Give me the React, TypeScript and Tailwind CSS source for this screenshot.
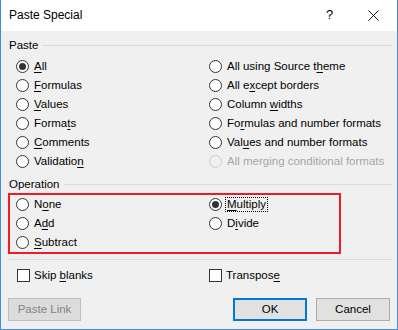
import React from 'react';

type Label = { pre?: string; k?: string; post?: string };

const Radio: React.FC<{ checked?: boolean; disabled?: boolean }> = ({ checked, disabled }) => (
  <span
    className={
      disabled
        ? 'w-[13px] h-[13px] rounded-full border border-[#cccccc] bg-[#f0f0f0] shrink-0'
        : 'w-[13px] h-[13px] rounded-full border border-[#333333] bg-white shrink-0 flex items-center justify-center'
    }
  >
    {checked && <span className="w-[7px] h-[7px] rounded-full bg-[#333333]" />}
  </span>
);

const Text: React.FC<{ label: Label }> = ({ label }) => (
  <>
    {label.pre}
    {label.k && <u className="underline-offset-[2px]">{label.k}</u>}
    {label.post}
  </>
);

const Option: React.FC<{ label: Label; checked?: boolean; disabled?: boolean; focus?: boolean }> = ({
  label,
  checked,
  disabled,
  focus,
}) => (
  <div className="h-[19px] flex items-center gap-[5px]">
    <Radio checked={checked} disabled={disabled} />
    <span
      className={
        focus
          ? 'outline outline-1 outline-dotted outline-black px-[1px] -ml-[1px] leading-[13px]'
          : disabled
            ? 'text-[#a6a6a6]'
            : ''
      }
    >
      <Text label={label} />
    </span>
  </div>
);

const Check: React.FC<{ label: Label }> = ({ label }) => (
  <div className="h-[19px] flex items-center gap-[4px]">
    <span className="w-[13px] h-[13px] border border-[#333333] bg-white shrink-0" />
    <span>
      <Text label={label} />
    </span>
  </div>
);

const GroupLabel: React.FC<{ title: string }> = ({ title }) => (
  <div className="h-[14px] flex items-center pl-[1px]">
    <span className="leading-[14px]">{title}</span>
    <div className="flex-1 h-px bg-[#dadada] ml-[4px]" />
  </div>
);

export default function App() {
  return (
    <div
      className="w-[398px] h-[330px] flex flex-col border-x border-b border-[#3b8ee3] text-[11.5px] text-black bg-[#f0f0f0]"
      style={{ fontFamily: '"Liberation Sans", Arial, sans-serif' }}
    >
      <div className="h-[31px] bg-white flex items-center pl-[8px] shrink-0 text-[12px]">
        <span className="flex-1 -mt-[1px]">Paste Special</span>
        <span className="w-[10px] text-[13px] mr-[32px] -mt-[1px]">?</span>
        <svg className="mr-[18px]" width="11" height="11" viewBox="0 0 11 11">
          <path d="M0.5 0.5L10.5 10.5M10.5 0.5L0.5 10.5" stroke="#111" strokeWidth="1" />
        </svg>
      </div>

      <div className="flex-1 flex flex-col pl-[7px] pr-[5px]">
        <div className="mt-[7px]">
          <GroupLabel title="Paste" />
        </div>
        <div className="mt-[5px] grid grid-cols-[193px_1fr] pl-[8px]">
          <Option label={{ k: 'A', post: 'll' }} checked />
          <Option label={{ pre: 'All using Source t', k: 'h', post: 'eme' }} />
          <Option label={{ k: 'F', post: 'ormulas' }} />
          <Option label={{ pre: 'All e', k: 'x', post: 'cept borders' }} />
          <Option label={{ k: 'V', post: 'alues' }} />
          <Option label={{ pre: 'Column ', k: 'w', post: 'idths' }} />
          <Option label={{ pre: 'Forma', k: 't', post: 's' }} />
          <Option label={{ pre: 'Fo', k: 'r', post: 'mulas and number formats' }} />
          <Option label={{ k: 'C', post: 'omments' }} />
          <Option label={{ pre: 'Val', k: 'u', post: 'es and number formats' }} />
          <Option label={{ pre: 'Validatio', k: 'n' }} />
          <Option label={{ pre: 'All merging conditional formats' }} disabled />
        </div>

        <div className="mt-[6px]">
          <GroupLabel title="Operation" />
        </div>
        <div className="mt-[2px] w-[333px] border-2 border-[#ee1c25] pl-[6px] grid grid-cols-[193px_1fr]">
          <Option label={{ pre: 'N', k: 'o', post: 'ne' }} />
          <Option label={{ k: 'M', post: 'ultiply' }} checked focus />
          <Option label={{ pre: 'A', k: 'd', post: 'd' }} />
          <Option label={{ pre: 'D', k: 'i', post: 'vide' }} />
          <Option label={{ k: 'S', post: 'ubtract' }} />
          <div />
        </div>

        <div className="mt-[5px] ml-[1px] h-px bg-[#dadada]" />

        <div className="mt-[6px] grid grid-cols-[192px_1fr] pl-[9px]">
          <Check label={{ pre: 'Skip ', k: 'b', post: 'lanks' }} />
          <Check label={{ pre: 'Transpos', k: 'e' }} />
        </div>

        <div className="mt-[13px] flex items-center">
          <button className="w-[73px] h-[23px] bg-[#dcdcdc] border border-[#bfbfbf] text-[#838383]">
            Paste Link
          </button>
          <div className="flex-1" />
          <button className="w-[74px] h-[23px] bg-[#e1e1e1] border-2 border-[#0078d7]">OK</button>
          <button className="w-[74px] h-[23px] bg-[#e1e1e1] border border-[#adadad] ml-[9px] mr-[2px]">
            Cancel
          </button>
        </div>
      </div>
    </div>
  );
}
